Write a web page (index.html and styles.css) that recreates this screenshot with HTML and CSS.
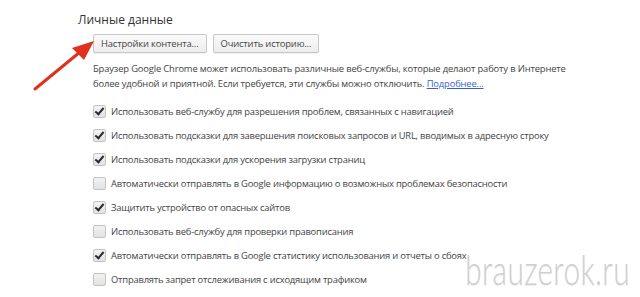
FILE: index.html
```html
<!DOCTYPE html>
<html lang="ru">
<head>
    <meta charset="UTF-8">
    <meta name="viewport" content="width=device-width, initial-scale=1.0">
    <title>Личные данные</title>
    <link rel="stylesheet" href="styles.css">
</head>
<body>
    <main class="settings">
        <h2 class="section-title">Личные данные</h2>
        <div class="section-body">
            <div class="buttons">
                <button class="btn">Настройки контента...</button>
                <button class="btn">Очистить историю...</button>
            </div>
            <p class="description">
                Браузер Google Chrome может использовать различные веб-службы, которые делают работу в Интернете<br>
                более удобной и приятной. Если требуется, эти службы можно отключить. <a href="#">Подробнее...</a>
            </p>
            <ul class="options">
                <li class="option"><span class="box checked"></span>Использовать веб-службу для разрешения проблем, связанных с навигацией</li>
                <li class="option"><span class="box checked"></span>Использовать подсказки для завершения поисковых запросов и URL, вводимых в адресную строку</li>
                <li class="option"><span class="box checked"></span>Использовать подсказки для ускорения загрузки страниц</li>
                <li class="option"><span class="box"></span>Автоматически отправлять в Google информацию о возможных проблемах безопасности</li>
                <li class="option"><span class="box checked"></span>Защитить устройство от опасных сайтов</li>
                <li class="option"><span class="box"></span>Использовать веб-службу для проверки правописания</li>
                <li class="option"><span class="box checked"></span>Автоматически отправлять в Google статистику использования и отчеты о сбоях</li>
                <li class="option"><span class="box"></span>Отправлять запрет отслеживания с исходящим трафиком</li>
            </ul>
        </div>
    </main>

    <!-- стрелка поверх страницы -->
    <svg class="arrow" width="110" height="100" viewBox="0 0 110 100">
        <line x1="35" y1="89" x2="80" y2="52" stroke="#e0301e" stroke-width="3" stroke-linecap="round"/>
        <polygon points="94,41 72,48 84,60" fill="#e0301e"/>
    </svg>

    <div class="watermark">brauzerok.ru</div>
</body>
</html>
```

FILE: styles.css
```css
body {
    margin: 0;
    padding: 0;
    background: #fff;
    font-family: "Open Sans", "Noto Sans", Arial, sans-serif;
    color: #333;
    position: relative;
    height: 297px;
    overflow: hidden;
}

.settings {
    padding: 11px 0 0 78px;
}

.section-title {
    margin: 0;
    font-size: 12px;
    font-weight: normal;
    line-height: 18px;
    color: #333;
}

.section-body {
    padding-left: 15px;
}

.buttons {
    display: flex;
    gap: 6px;
    margin-top: 5px;
}

.btn {
    font-family: inherit;
    font-size: 9.4px;
    letter-spacing: -0.15px;
    color: #444;
    height: 19px;
    padding: 0 7px;
    background: linear-gradient(#fafafa, #ededed);
    border: 1px solid #c6c6c6;
    border-radius: 2px;
    box-shadow: 0 1px 0 rgba(0, 0, 0, 0.05);
}

.description {
    margin: 8px 0 0;
    font-size: 9.4px;
    letter-spacing: -0.15px;
    line-height: 15px;
    color: #444;
}

.description a {
    color: #3a5fcd;
}

.options {
    list-style: none;
    margin: 8px 0 0;
    padding: 0;
}

.option {
    display: flex;
    align-items: center;
    gap: 5px;
    height: 24.1px;
    font-size: 9.4px;
    letter-spacing: -0.2px;
    color: #444;
}

.box {
    position: relative;
    width: 11px;
    height: 11px;
    border: 1px solid #c4c4c4;
    border-radius: 2px;
    background: linear-gradient(#f2f2f2, #e2e2e2);
    flex-shrink: 0;
}

.box.checked::after {
    content: "";
    position: absolute;
    left: 3px;
    top: 0;
    width: 3px;
    height: 7px;
    border: solid #2a2a2a;
    border-width: 0 2px 2px 0;
    transform: rotate(40deg);
}

.arrow {
    position: absolute;
    left: 0;
    top: 0;
}

.watermark {
    position: absolute;
    right: 10px;
    bottom: 3px;
    font-family: Lato, "Open Sans", sans-serif;
    font-weight: 300;
    font-size: 42px;
    letter-spacing: 0.5px;
    color: #cfcfcf;
    text-shadow: 0 1px 1px rgba(0, 0, 0, 0.08);
    transform: scaleX(0.71);
    transform-origin: right bottom;
}
```
